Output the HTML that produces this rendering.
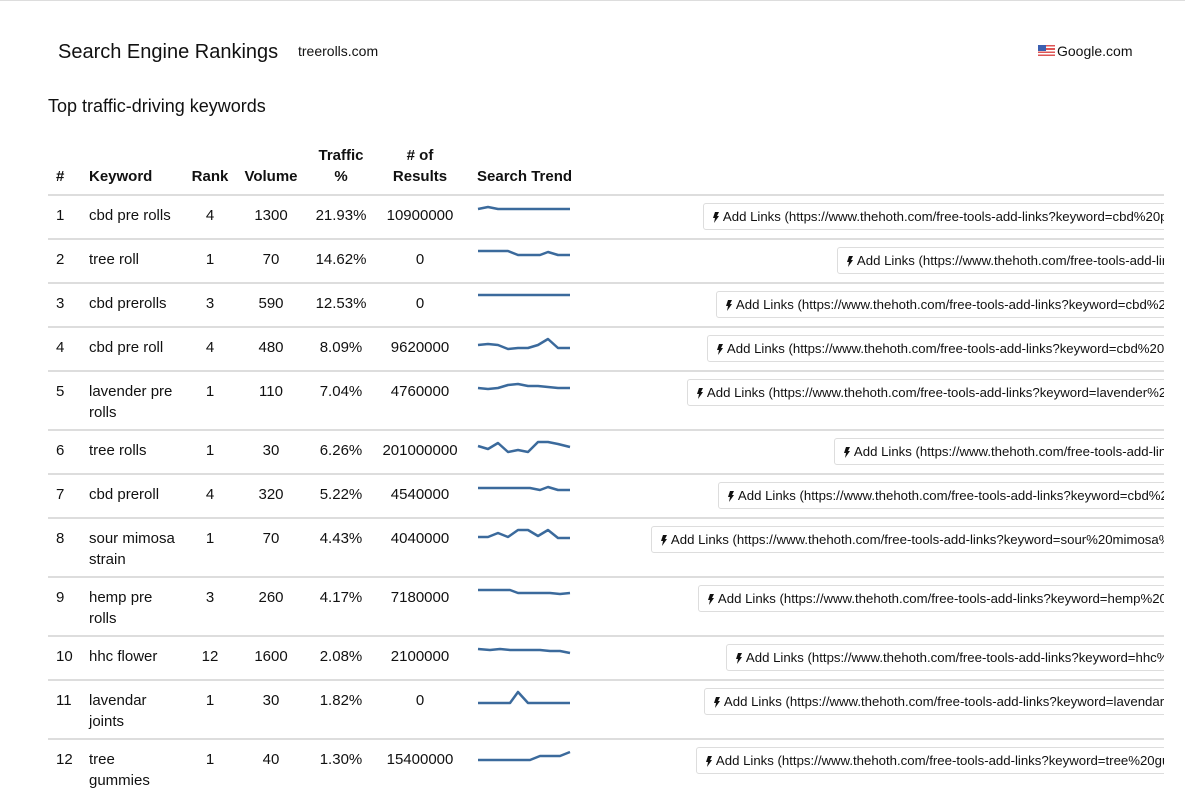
<!DOCTYPE html>
<html><head><meta charset="utf-8"><style>
body{margin:0;width:1185px;height:792px;overflow:hidden;background:#fff;font-family:"Liberation Sans",Arial,sans-serif;color:#111;position:relative}
.a{position:absolute}
.t{position:absolute;font-size:15px;line-height:21px;white-space:nowrap;margin-top:1px}
.c{text-align:center;width:80px}
.h{font-weight:bold}
.ln{position:absolute;left:48px;width:1116px;height:2px;background:#ddd}
.clip{position:absolute;left:0;top:0;width:1164px;height:792px;overflow:hidden}
.btn{position:absolute;height:25px;border:1px solid #ddd;border-radius:3px;background:#fff;font-size:13.2px;line-height:25px;padding:0 10px 0 9px;white-space:nowrap;color:#111}
.btn svg{vertical-align:-2px;margin-right:1px}
</style></head><body>
<div class="a" style="left:0;top:0;width:1185px;height:1px;background:#ddd"></div>
<div class="t" style="left:58px;top:39px;font-size:20px;line-height:24px">Search Engine Rankings</div>
<div class="t" style="left:298px;top:41px;font-size:14px;line-height:18px">treerolls.com</div>
<div class="a" style="left:1038px;top:45px;width:17px;height:11px;background:repeating-linear-gradient(#d55 0 1.6px,#fff 1.6px 3.2px)"><div style="width:8px;height:6px;background:#3b5fb0"></div></div>
<div class="t" style="left:1057px;top:41px;font-size:14px;line-height:18px">Google.com</div>
<div class="t" style="left:48px;top:94px;font-size:18px;line-height:22px">Top traffic-driving keywords</div>

<div class="t h" style="left:56px;top:165px">#</div>
<div class="t h" style="left:89px;top:165px">Keyword</div>
<div class="t h c" style="left:170px;top:165px">Rank</div>
<div class="t h c" style="left:231px;top:165px">Volume</div>
<div class="t h c" style="left:301px;top:144px">Traffic<br>%</div>
<div class="t h c" style="left:380px;top:144px">#&nbsp;of<br>Results</div>
<div class="t h" style="left:477px;top:165px">Search Trend</div>

<div class="ln" style="top:194px"></div>
<div class="ln" style="top:238px"></div>
<div class="ln" style="top:282px"></div>
<div class="ln" style="top:326px"></div>
<div class="ln" style="top:370px"></div>
<div class="ln" style="top:429px"></div>
<div class="ln" style="top:473px"></div>
<div class="ln" style="top:517px"></div>
<div class="ln" style="top:576px"></div>
<div class="ln" style="top:635px"></div>
<div class="ln" style="top:679px"></div>
<div class="ln" style="top:738px"></div>

<div class="t" style="left:56px;top:204px">1</div><div class="t" style="left:89px;top:204px">cbd pre rolls</div><div class="t c" style="left:170px;top:204px">4</div><div class="t c" style="left:231px;top:204px">1300</div><div class="t c" style="left:301px;top:204px">21.93%</div><div class="t c" style="left:380px;top:204px">10900000</div>
<div class="t" style="left:56px;top:248px">2</div><div class="t" style="left:89px;top:248px">tree roll</div><div class="t c" style="left:170px;top:248px">1</div><div class="t c" style="left:231px;top:248px">70</div><div class="t c" style="left:301px;top:248px">14.62%</div><div class="t c" style="left:380px;top:248px">0</div>
<div class="t" style="left:56px;top:292px">3</div><div class="t" style="left:89px;top:292px">cbd prerolls</div><div class="t c" style="left:170px;top:292px">3</div><div class="t c" style="left:231px;top:292px">590</div><div class="t c" style="left:301px;top:292px">12.53%</div><div class="t c" style="left:380px;top:292px">0</div>
<div class="t" style="left:56px;top:336px">4</div><div class="t" style="left:89px;top:336px">cbd pre roll</div><div class="t c" style="left:170px;top:336px">4</div><div class="t c" style="left:231px;top:336px">480</div><div class="t c" style="left:301px;top:336px">8.09%</div><div class="t c" style="left:380px;top:336px">9620000</div>
<div class="t" style="left:56px;top:380px">5</div><div class="t" style="left:89px;top:380px">lavender pre<br>rolls</div><div class="t c" style="left:170px;top:380px">1</div><div class="t c" style="left:231px;top:380px">110</div><div class="t c" style="left:301px;top:380px">7.04%</div><div class="t c" style="left:380px;top:380px">4760000</div>
<div class="t" style="left:56px;top:439px">6</div><div class="t" style="left:89px;top:439px">tree rolls</div><div class="t c" style="left:170px;top:439px">1</div><div class="t c" style="left:231px;top:439px">30</div><div class="t c" style="left:301px;top:439px">6.26%</div><div class="t c" style="left:370px;top:439px;width:100px">201000000</div>
<div class="t" style="left:56px;top:483px">7</div><div class="t" style="left:89px;top:483px">cbd preroll</div><div class="t c" style="left:170px;top:483px">4</div><div class="t c" style="left:231px;top:483px">320</div><div class="t c" style="left:301px;top:483px">5.22%</div><div class="t c" style="left:380px;top:483px">4540000</div>
<div class="t" style="left:56px;top:527px">8</div><div class="t" style="left:89px;top:527px">sour mimosa<br>strain</div><div class="t c" style="left:170px;top:527px">1</div><div class="t c" style="left:231px;top:527px">70</div><div class="t c" style="left:301px;top:527px">4.43%</div><div class="t c" style="left:380px;top:527px">4040000</div>
<div class="t" style="left:56px;top:586px">9</div><div class="t" style="left:89px;top:586px">hemp pre<br>rolls</div><div class="t c" style="left:170px;top:586px">3</div><div class="t c" style="left:231px;top:586px">260</div><div class="t c" style="left:301px;top:586px">4.17%</div><div class="t c" style="left:380px;top:586px">7180000</div>
<div class="t" style="left:56px;top:645px">10</div><div class="t" style="left:89px;top:645px">hhc flower</div><div class="t c" style="left:170px;top:645px">12</div><div class="t c" style="left:231px;top:645px">1600</div><div class="t c" style="left:301px;top:645px">2.08%</div><div class="t c" style="left:380px;top:645px">2100000</div>
<div class="t" style="left:56px;top:689px">11</div><div class="t" style="left:89px;top:689px">lavendar<br>joints</div><div class="t c" style="left:170px;top:689px">1</div><div class="t c" style="left:231px;top:689px">30</div><div class="t c" style="left:301px;top:689px">1.82%</div><div class="t c" style="left:380px;top:689px">0</div>
<div class="t" style="left:56px;top:748px">12</div><div class="t" style="left:89px;top:748px">tree<br>gummies</div><div class="t c" style="left:170px;top:748px">1</div><div class="t c" style="left:231px;top:748px">40</div><div class="t c" style="left:301px;top:748px">1.30%</div><div class="t c" style="left:380px;top:748px">15400000</div>

<svg class="a" style="left:0;top:0" width="1185" height="792" fill="none" stroke="#3b6a9c" stroke-width="2.5" stroke-linejoin="round">
<polyline points="478,209 488,207 498,209 570,209"/>
<polyline points="478,251 508,251 518,255 540,255 548,252 558,255 570,255"/>
<polyline points="478,295 570,295"/>
<polyline points="478,345 488,344 498,345 508,349 518,348 528,348 538,345 548,339 558,348 570,348"/>
<polyline points="478,388 488,389 498,388 508,385 518,384 528,386 538,386 548,387 558,388 570,388"/>
<polyline points="478,446 488,449 498,443 508,452 518,450 528,452 538,442 548,442 558,444 570,447"/>
<polyline points="478,488 530,488 540,490 548,487 558,490 570,490"/>
<polyline points="478,537 488,537 498,533 508,537 518,530 528,530 538,536 548,530 558,538 570,538"/>
<polyline points="478,590 510,590 518,593 550,593 560,594 570,593"/>
<polyline points="478,649 490,650 500,649 510,650 520,650 540,650 550,651 560,651 570,653"/>
<polyline points="478,703 510,703 518,692 528,703 570,703"/>
<polyline points="478,760 530,760 540,756 560,756 570,752"/>
</svg>

<div class="clip">
<div class="btn" style="left:703px;top:203px"><svg width="6" height="11" viewBox="0 0 6 11"><path d="M2 0H6L4 4H6L1 11L2 6H0Z" fill="#111"/></svg> Add Links (https://www.thehoth.com/free-tools-add-links?keyword=cbd%20pre%20rolls)</div>
<div class="btn" style="left:837px;top:247px"><svg width="6" height="11" viewBox="0 0 6 11"><path d="M2 0H6L4 4H6L1 11L2 6H0Z" fill="#111"/></svg> Add Links (https://www.thehoth.com/free-tools-add-links?keyword=tree%20roll)</div>
<div class="btn" style="left:716px;top:291px"><svg width="6" height="11" viewBox="0 0 6 11"><path d="M2 0H6L4 4H6L1 11L2 6H0Z" fill="#111"/></svg> Add Links (https://www.thehoth.com/free-tools-add-links?keyword=cbd%20prerolls)</div>
<div class="btn" style="left:707px;top:335px"><svg width="6" height="11" viewBox="0 0 6 11"><path d="M2 0H6L4 4H6L1 11L2 6H0Z" fill="#111"/></svg> Add Links (https://www.thehoth.com/free-tools-add-links?keyword=cbd%20pre%20roll)</div>
<div class="btn" style="left:687px;top:379px"><svg width="6" height="11" viewBox="0 0 6 11"><path d="M2 0H6L4 4H6L1 11L2 6H0Z" fill="#111"/></svg> Add Links (https://www.thehoth.com/free-tools-add-links?keyword=lavender%20pre%20rolls)</div>
<div class="btn" style="left:834px;top:438px"><svg width="6" height="11" viewBox="0 0 6 11"><path d="M2 0H6L4 4H6L1 11L2 6H0Z" fill="#111"/></svg> Add Links (https://www.thehoth.com/free-tools-add-links?keyword=tree%20rolls)</div>
<div class="btn" style="left:718px;top:482px"><svg width="6" height="11" viewBox="0 0 6 11"><path d="M2 0H6L4 4H6L1 11L2 6H0Z" fill="#111"/></svg> Add Links (https://www.thehoth.com/free-tools-add-links?keyword=cbd%20preroll)</div>
<div class="btn" style="left:651px;top:526px"><svg width="6" height="11" viewBox="0 0 6 11"><path d="M2 0H6L4 4H6L1 11L2 6H0Z" fill="#111"/></svg> Add Links (https://www.thehoth.com/free-tools-add-links?keyword=sour%20mimosa%20strain)</div>
<div class="btn" style="left:698px;top:585px"><svg width="6" height="11" viewBox="0 0 6 11"><path d="M2 0H6L4 4H6L1 11L2 6H0Z" fill="#111"/></svg> Add Links (https://www.thehoth.com/free-tools-add-links?keyword=hemp%20pre%20rolls)</div>
<div class="btn" style="left:726px;top:644px"><svg width="6" height="11" viewBox="0 0 6 11"><path d="M2 0H6L4 4H6L1 11L2 6H0Z" fill="#111"/></svg> Add Links (https://www.thehoth.com/free-tools-add-links?keyword=hhc%20flower)</div>
<div class="btn" style="left:704px;top:688px"><svg width="6" height="11" viewBox="0 0 6 11"><path d="M2 0H6L4 4H6L1 11L2 6H0Z" fill="#111"/></svg> Add Links (https://www.thehoth.com/free-tools-add-links?keyword=lavendar%20joints)</div>
<div class="btn" style="left:696px;top:747px"><svg width="6" height="11" viewBox="0 0 6 11"><path d="M2 0H6L4 4H6L1 11L2 6H0Z" fill="#111"/></svg> Add Links (https://www.thehoth.com/free-tools-add-links?keyword=tree%20gummies)</div>
</div>
</body></html>
